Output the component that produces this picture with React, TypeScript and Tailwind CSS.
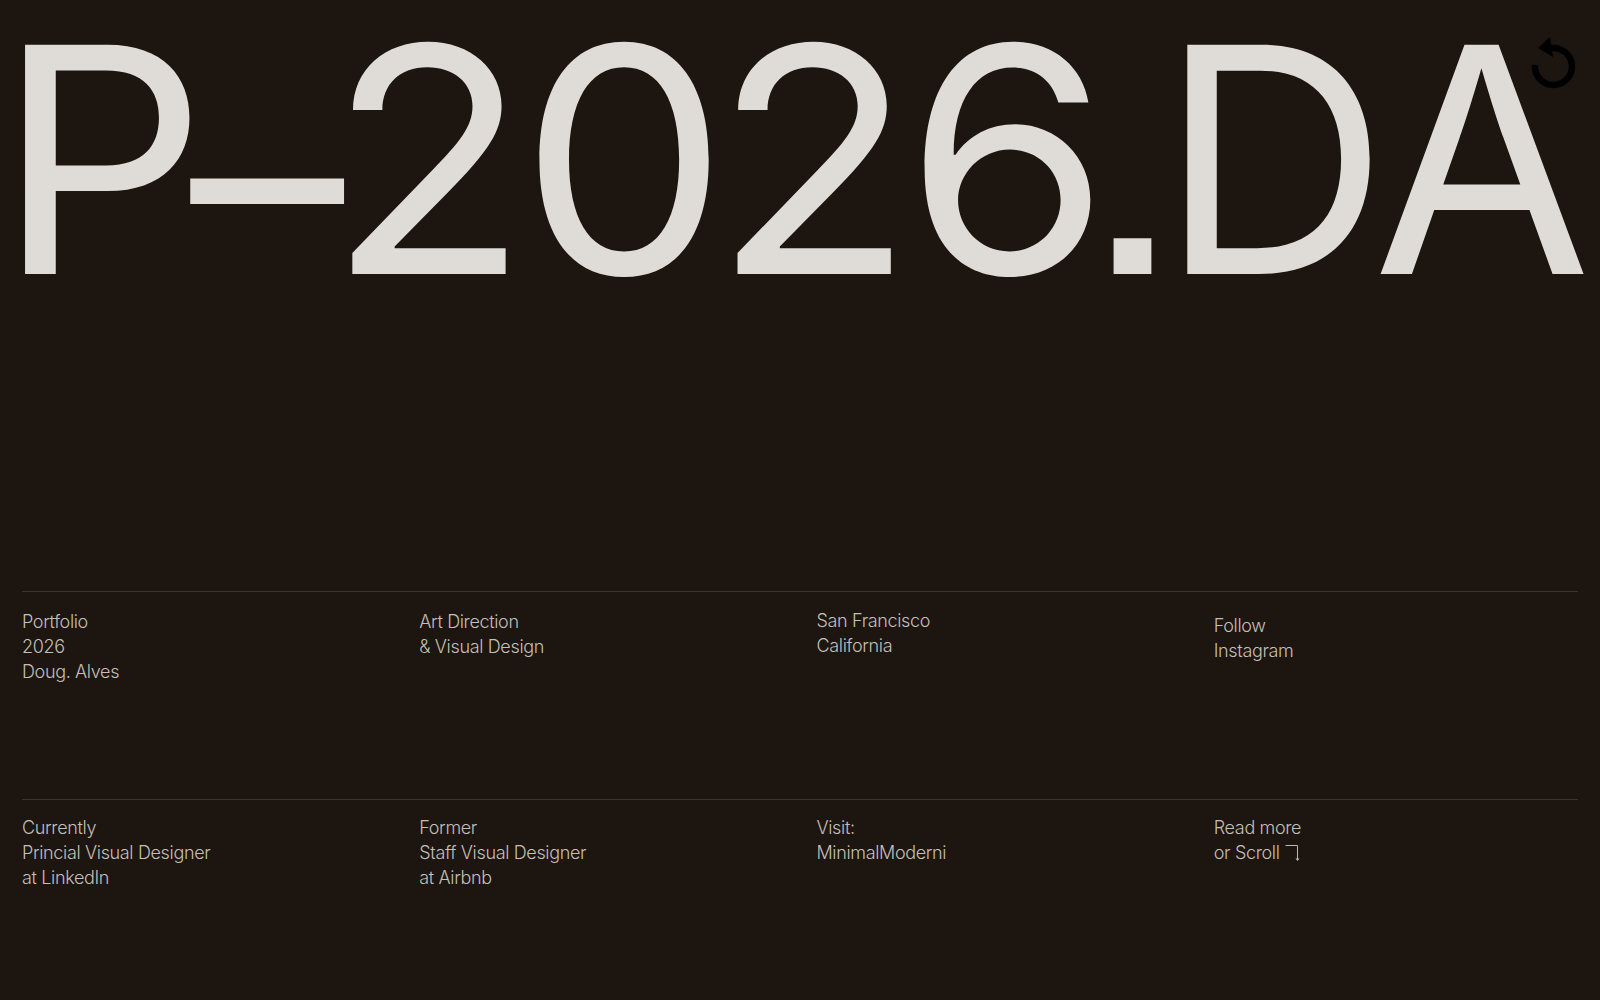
const rows = [
  [
    { lines: ["Portfolio", "2026", "Doug. Alves"], offset: "" },
    { lines: ["Art Direction", "& Visual Design"], offset: "" },
    { lines: ["San Francisco", "California"], offset: "-mt-px" },
    { lines: ["Follow", "Instagram"], offset: "mt-[4px]" },
  ],
  [
    { lines: ["Currently", "Princial Visual Designer", "at LinkedIn"], offset: "" },
    { lines: ["Former", "Staff Visual Designer", "at Airbnb"], offset: "" },
    { lines: ["Visit:", "MinimalModerni"], offset: "" },
    { lines: ["Read more"], offset: "", scroll: true },
  ],
]

function ReloadMark() {
  return (
    <svg viewBox="0 0 48 56" className="absolute right-[23px] top-[35px] h-[56px] w-[48px]" fill="none">
      <path d="M20 13.5 A18.5 18.5 0 1 1 6 30" stroke="#000" strokeWidth="6.5" />
      <path d="M21 2 L9 13 L24 22 Z" fill="#000" />
    </svg>
  )
}

function ScrollArrow() {
  return (
    <svg viewBox="0 0 16 18" className="ml-[6px] h-[18px] w-[16px]" fill="none">
      <path d="M0.5 1.5 H12.5 V16" stroke="#bdb8b1" strokeWidth="1" />
      <path d="M10.5 14.5 L12.5 17 L14.5 14.5 Z" fill="#bdb8b1" />
    </svg>
  )
}

export default function App() {
  return (
    <main className="relative h-[1000px] w-full overflow-hidden bg-[#1c1510] font-['Inter',sans-serif]">
      <h1 className="-ml-[4px] origin-left scale-x-[1.05] whitespace-nowrap text-[315px] font-normal leading-[320px] tracking-[-14px] text-[#dfdbd6] [font-feature-settings:'ss07']">
        <span>P</span>
        <span className="-ml-[2px] inline-block origin-left translate-y-[15px] scale-x-[0.93]">–</span>
        <span className="-ml-[13px]">2</span>
        <span className="ml-[5px]">0</span>
        <span className="-ml-[1px]">2</span>
        <span className="ml-[5px]">6</span>
        <span className="-ml-[10px]">.</span>
        <span className="-ml-[6px] inline-block origin-left scale-x-[0.96]">D</span>
        <span className="-ml-[10px] inline-block origin-left scale-x-[0.96]">A</span>
      </h1>
      <ReloadMark />
      <div className="mx-[22px] mt-[271px] border-t border-[#3a332d]">
        <div className="grid h-[207px] grid-cols-4 gap-[33px] pt-[17px]">
          {rows[0].map((col) => (
            <div key={col.lines[0]} className={`text-[18px] font-light leading-[25px] tracking-[-0.35px] text-[#c4bfb8] ${col.offset}`}>
              {col.lines.map((line) => (
                <p key={line}>{line}</p>
              ))}
            </div>
          ))}
        </div>
      </div>
      <div className="mx-[22px] border-t border-[#3a332d]">
        <div className="grid grid-cols-4 gap-[33px] pt-[15px]">
          {rows[1].map((col) => (
            <div key={col.lines[0]} className="text-[18px] font-light leading-[25px] tracking-[-0.35px] text-[#c4bfb8]">
              {col.lines.map((line) => (
                <p key={line}>{line}</p>
              ))}
              {col.scroll && (
                <p className="flex items-center">
                  or Scroll
                  <ScrollArrow />
                </p>
              )}
            </div>
          ))}
        </div>
      </div>
    </main>
  )
}
